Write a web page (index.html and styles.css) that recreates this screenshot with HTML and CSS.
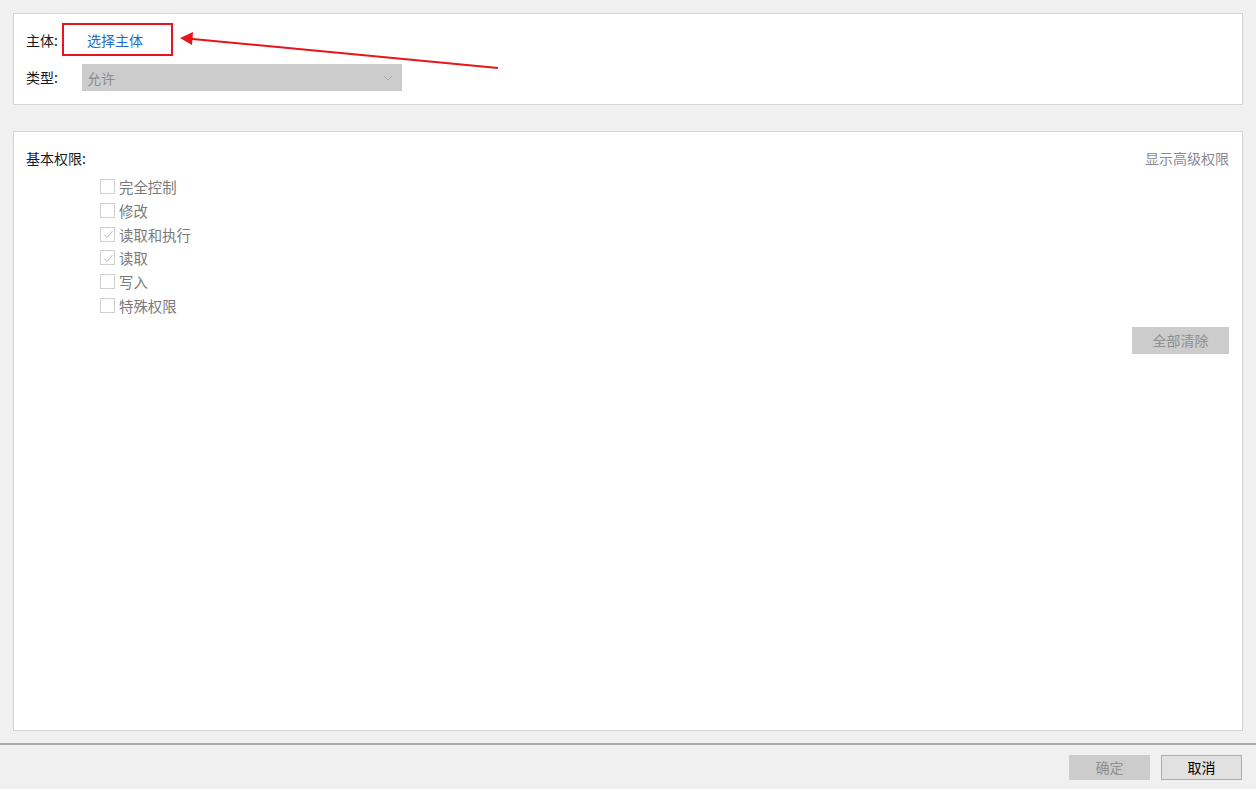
FILE: index.html
```html
<!DOCTYPE html>
<html lang="zh-CN">
<head>
<meta charset="utf-8">
<title>权限项目</title>
<link rel="stylesheet" href="styles.css">
</head>
<body>
<div class="page">
  <div class="wrap">
    <section class="panel panel-top">
      <div class="row row-principal">
        <span class="label label-short">主体:</span>
        <span class="principal-box"><a class="principal-link">选择主体</a></span>
      </div>
      <div class="row row-type">
        <span class="label label-long">类型:</span>
        <div class="select">
          <span>允许</span>
          <svg class="chev" width="10" height="6" viewBox="0 0 10 6"><path d="M1 1 L5 5 L9 1" fill="none" stroke="#a8a8a8" stroke-width="1"/></svg>
        </div>
      </div>
    </section>

    <section class="panel panel-perms">
      <div class="perm-head">
        <span class="label">基本权限:</span>
        <a class="adv-link">显示高级权限</a>
      </div>
      <ul class="perm-list">
        <li><span class="cb"></span>完全控制</li>
        <li><span class="cb"></span>修改</li>
        <li><span class="cb checked"><svg width="12" height="12" viewBox="0 0 12 12"><path d="M2 6.5 L5 9.5 L10.5 3" fill="none" stroke="#bdbdbd" stroke-width="1"/></svg></span>读取和执行</li>
        <li><span class="cb checked"><svg width="12" height="12" viewBox="0 0 12 12"><path d="M2 6.5 L5 9.5 L10.5 3" fill="none" stroke="#bdbdbd" stroke-width="1"/></svg></span>读取</li>
        <li><span class="cb"></span>写入</li>
        <li><span class="cb"></span>特殊权限</li>
      </ul>
      <div class="clear-row">
        <button class="btn btn-disabled btn-clear">全部清除</button>
      </div>
    </section>
  </div>

  <footer class="footer">
    <button class="btn btn-disabled btn-foot">确定</button>
    <button class="btn btn-normal btn-foot">取消</button>
  </footer>

  <svg class="arrow" width="520" height="110" viewBox="0 0 520 110">
    <line x1="498" y1="68" x2="190" y2="38.8" stroke="#e8141b" stroke-width="2"/>
    <polygon points="180,38 193,32 192,45" fill="#e8141b"/>
  </svg>
</div>
</body>
</html>
```

FILE: styles.css
```css
html, body {
  margin: 0;
  padding: 0;
}
body {
  background: #f0f0f0;
  font-family: "Noto Sans CJK SC", "Microsoft YaHei", sans-serif;
  font-size: 14px;
  color: #1a1a1a;
}
.page {
  position: relative;
  width: 1256px;
  height: 789px;
  overflow: hidden;
}
.wrap {
  padding: 13px 13px 0 13px;
}
.panel {
  background: #ffffff;
  border: 1px solid #d4d4d4;
  box-sizing: border-box;
}
.panel-top {
  height: 92px;
  padding: 9px 12px 0 12px;
}
.row {
  display: flex;
  align-items: center;
}
.row-principal {
  height: 33px;
}
.row-type {
  margin-top: 8px;
  height: 27px;
}
.label {
  line-height: 20px;
  color: #1a1a1a;
}
.label-short {
  width: 36px;
  flex: none;
}
.label-long {
  width: 56px;
  flex: none;
  position: relative;
  top: -1px;
}
.principal-box {
  box-sizing: border-box;
  width: 111px;
  height: 33px;
  border: 2px solid #e8141b;
  padding-left: 23px;
  display: flex;
  align-items: center;
}
.principal-link {
  color: #1e6fc5;
  font-size: 14px;
  text-decoration: none;
}
.select {
  box-sizing: border-box;
  width: 320px;
  height: 27px;
  background: #cccccc;
  color: #8c8c8c;
  padding: 0 9px 0 5px;
  display: flex;
  align-items: center;
  justify-content: space-between;
}
.panel-perms {
  margin-top: 26px;
  height: 600px;
  padding: 16px 13px 0 12px;
}
.perm-head {
  display: flex;
  justify-content: space-between;
  align-items: center;
  height: 20px;
}
.adv-link {
  color: #8a8a96;
  line-height: 20px;
}
.perm-list {
  list-style: none;
  margin: 7px 0 0 74px;
  padding: 0;
}
.perm-list li {
  display: flex;
  align-items: center;
  height: 23.7px;
  color: #7a7a7a;
  font-size: 14.4px;
}
.cb {
  box-sizing: border-box;
  width: 15px;
  height: 15px;
  border: 1px solid #d0d0d0;
  background: #ffffff;
  margin-right: 4px;
  display: flex;
  align-items: center;
  justify-content: center;
}
.clear-row {
  display: flex;
  justify-content: flex-end;
  margin-top: 10px;
}
.btn {
  font-family: "Noto Sans CJK SC", "Microsoft YaHei", sans-serif;
  font-size: 14px;
  line-height: 20px;
  box-sizing: border-box;
  padding: 0 0 2px 0;
  cursor: default;
}
.btn-disabled {
  background: #cccccc;
  border: 1px solid #cccccc;
  color: #8f8f8f;
}
.btn-normal {
  background: #e1e1e1;
  border: 1px solid #adadad;
  color: #000000;
}
.btn-clear {
  width: 97px;
  height: 27px;
}
.footer {
  margin-top: 12px;
  border-top: 2px solid #ababab;
  background: #f0f0f0;
  display: flex;
  justify-content: flex-end;
  gap: 11px;
  padding: 10px 14px 0 0;
}
.btn-foot {
  width: 81px;
  height: 25px;
}
.arrow {
  position: absolute;
  top: 0;
  left: 0;
  pointer-events: none;
}
```
